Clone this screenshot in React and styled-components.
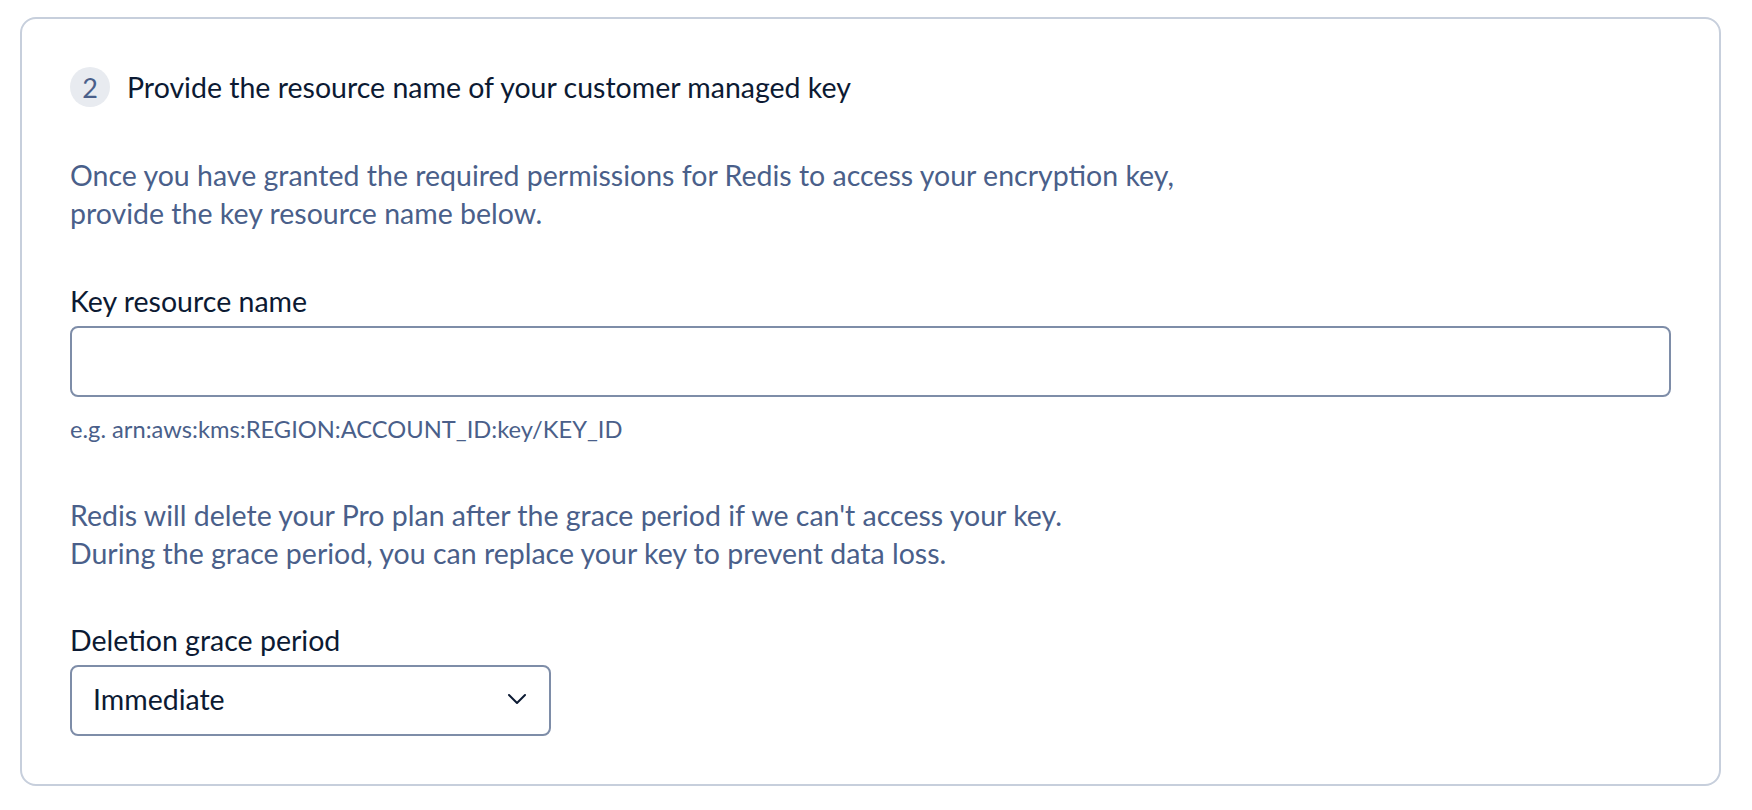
import React from "react";
import styled, { createGlobalStyle } from "styled-components";

const GlobalStyle = createGlobalStyle`
  html, body {
    margin: 0;
    padding: 0;
    background: #ffffff;
  }
  body {
    font-family: Lato, "Open Sans", sans-serif;
    -webkit-font-smoothing: antialiased;
  }
`;

const Page = styled.div`
  padding: 17px 31px 24px 20px;
`;

const Card = styled.section`
  border: 2px solid #c7cfdc;
  border-radius: 16px;
  padding: 48px 48px 48px 48px;
  display: flex;
  flex-direction: column;
`;

const StepHeader = styled.div`
  display: flex;
  align-items: center;
  gap: 17px;
`;

const StepBadge = styled.span`
  width: 40px;
  height: 40px;
  border-radius: 50%;
  background: #e8ebf0;
  color: #4a5f8a;
  display: flex;
  align-items: center;
  justify-content: center;
  font-size: 27px;
`;

const StepTitle = styled.h2`
  margin: 0;
  font-size: 28.5px;
  line-height: 40px;
  font-weight: 400;
  color: #0c1a33;
`;

const Description = styled.p`
  margin: ${(p) => p.$top || 0}px 0 0;
  font-size: 28.5px;
  line-height: 37.5px;
  color: #4a5f8a;
`;

const Field = styled.div`
  display: flex;
  flex-direction: column;
  gap: 8px;
  margin-top: ${(p) => p.$top || 0}px;
`;

const Label = styled.label`
  font-size: 28.5px;
  line-height: 34px;
  color: #0c1a33;
`;

const TextInput = styled.input`
  box-sizing: border-box;
  width: 100%;
  height: 71px;
  border: 2px solid #7e8da8;
  border-radius: 8px;
  padding: 0 20px;
  font-family: inherit;
  font-size: 28.5px;
  color: #0c1a33;
  outline: none;
  background: #fff;
`;

const Hint = styled.span`
  margin-top: 9px;
  font-size: 23.7px;
  line-height: 30px;
  color: #4a5f8a;
`;

const SelectBox = styled.button`
  box-sizing: border-box;
  width: 481px;
  height: 71px;
  border: 2px solid #7e8da8;
  border-radius: 8px;
  padding: 0 22px 3px 21px;
  background: #fff;
  display: flex;
  align-items: center;
  justify-content: space-between;
  font-family: inherit;
  font-size: 28.5px;
  color: #0c1a33;
  cursor: pointer;
`;

const Chevron = () => (
  <svg width="20" height="12" viewBox="0 0 20 12" fill="none">
    <path d="M2 2l8 8 8-8" stroke="#0c1a33" strokeWidth="2" strokeLinecap="round" strokeLinejoin="round" />
  </svg>
);

export default function App() {
  return (
    <Page>
      <GlobalStyle />
      <Card>
        <StepHeader>
          <StepBadge>2</StepBadge>
          <StepTitle>Provide the resource name of your customer managed key</StepTitle>
        </StepHeader>

        <Description $top={50}>
          Once you have granted the required permissions for Redis to access your encryption key,
          <br />
          provide the key resource name below.
        </Description>

        <Field $top={52}>
          <Label htmlFor="key-name">Key resource name</Label>
          <TextInput id="key-name" type="text" />
          <Hint>e.g. arn:aws:kms:REGION:ACCOUNT_ID:key/KEY_ID</Hint>
        </Field>

        <Description $top={53}>
          Redis will delete your Pro plan after the grace period if we can't access your key.
          <br />
          During the grace period, you can replace your key to prevent data loss.
        </Description>

        <Field $top={51}>
          <Label>Deletion grace period</Label>
          <SelectBox type="button">
            <span>Immediate</span>
            <Chevron />
          </SelectBox>
        </Field>
      </Card>
    </Page>
  );
}
